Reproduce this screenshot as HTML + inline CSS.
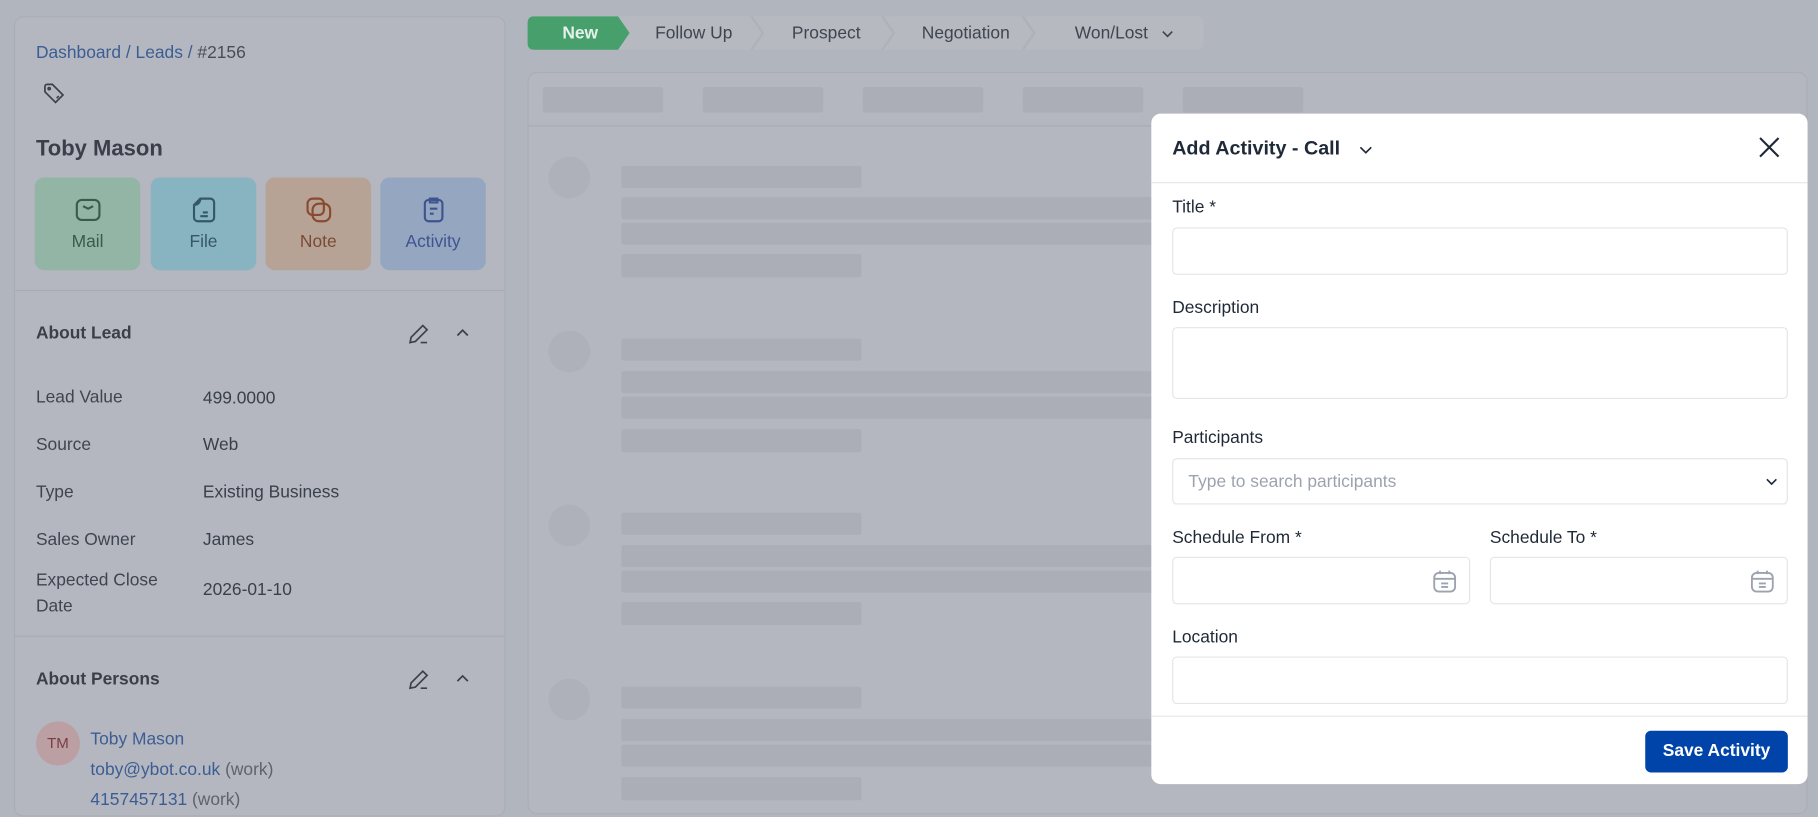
<!DOCTYPE html>
<html><head><meta charset="utf-8"><style>
*{box-sizing:border-box;margin:0;padding:0}
html,body{width:1818px;height:798px;overflow:hidden;background:#b1b5bd;font-family:"Liberation Sans",sans-serif}
#w{position:absolute;left:0;top:0;width:1568px;height:688px;transform:scale(1.15944,1.15988);transform-origin:0 0}
.a{position:absolute}
.sk{position:absolute;background:#abaeb6;border-radius:2px}
.lbl{position:absolute;font-size:15px;color:#3f4550}
.val{position:absolute;font-size:15px;color:#3a404b}
.btn{position:absolute;top:153px;width:91px;height:80px;border-radius:8px;text-align:center;font-size:15px}
.btn svg{display:block;margin:15px auto 6px}
.ml{position:absolute;left:1011px;font-size:15px;color:#1f2937}
.in{position:absolute;left:1011px;width:531px;background:#fff;border:1px solid #e3e5e8;border-radius:4px}
</style></head><body><div id="w">
<!-- left panel -->
<div class="a" style="left:12px;top:14px;width:424px;height:690px;background:#b4b7bf;border:1px solid #a9adb5;border-radius:8px"></div>
<div class="a" style="left:31px;top:37px;font-size:15px;color:#3c5d93">Dashboard / Leads / <span style="color:#474d58">#2156</span></div>
<svg class="a" style="left:36px;top:70px" width="22" height="22" viewBox="0 0 24 24" fill="none" stroke="#3b414b" stroke-width="1.6"><path d="M3 5v5l10 10 7-7L10 3H5a2 2 0 0 0-2 2z"/><circle cx="7" cy="7" r="1"/><path d="M14 16l2-2"/></svg>
<div class="a" style="left:31px;top:118px;font-size:19px;font-weight:bold;color:#3a3f49">Toby Mason</div>
<div class="btn" style="left:30px;background:#93b5a6;color:#3a5b4c"><svg width="26" height="26" viewBox="0 0 24 24" fill="none" stroke="#3a5b4c" stroke-width="1.7"><rect x="3" y="4" width="18" height="16" rx="4"/><path d="M8 9l4 2 4-2"/></svg>Mail</div>
<div class="btn" style="left:130px;background:#88b3c0;color:#355866"><svg width="26" height="26" viewBox="0 0 24 24" fill="none" stroke="#355866" stroke-width="1.7"><path d="M9 3h8a3 3 0 0 1 3 3v12a3 3 0 0 1-3 3H7a3 3 0 0 1-3-3V8z M4 8c3 0 5-2 5-5M11 14h4M9 17h6"/></svg>File</div>
<div class="btn" style="left:229px;background:#b6a395;color:#7a4b35"><svg width="26" height="26" viewBox="0 0 24 24" fill="none" stroke="#8a4a30" stroke-width="1.7"><rect x="3" y="3" width="13" height="13" rx="4"/><rect x="7" y="7" width="14" height="14" rx="5"/></svg>Note</div>
<div class="btn" style="left:328px;background:#95a7c0;color:#3f548f"><svg width="26" height="26" viewBox="0 0 24 24" fill="none" stroke="#3f548f" stroke-width="1.7"><rect x="5" y="4" width="14" height="17" rx="3"/><path d="M9 3h6v3H9zM9 11h6M9 15h3"/></svg>Activity</div>
<div class="a" style="left:13px;top:250px;width:423px;height:1px;background:#a7abb3"></div>
<div class="a" style="left:31px;top:279px;font-size:15px;font-weight:bold;color:#3a3f49">About Lead</div>
<svg class="a" style="left:350px;top:277px" width="22" height="22" viewBox="0 0 24 24" fill="none" stroke="#3b414b" stroke-width="1.6"><path d="M4 20l1-5L16 4l4 4L9 19zM14 20h6"/></svg>
<svg class="a" style="left:390px;top:278px" width="18" height="18" viewBox="0 0 24 24" fill="none" stroke="#3b414b" stroke-width="2"><path d="M6 15l6-6 6 6"/></svg>
<div class="lbl" style="left:31px;top:334px">Lead Value</div><div class="val" style="left:175px;top:335px">499.0000</div>
<div class="lbl" style="left:31px;top:375px">Source</div><div class="val" style="left:175px;top:375px">Web</div>
<div class="lbl" style="left:31px;top:416px">Type</div><div class="val" style="left:175px;top:416px">Existing Business</div>
<div class="lbl" style="left:31px;top:457px">Sales Owner</div><div class="val" style="left:175px;top:457px">James</div>
<div class="lbl" style="left:31px;top:490px;line-height:22px">Expected Close<br>Date</div><div class="val" style="left:175px;top:500px">2026-01-10</div>
<div class="a" style="left:13px;top:548px;width:423px;height:1px;background:#a7abb3"></div>
<div class="a" style="left:31px;top:577px;font-size:15px;font-weight:bold;color:#3a3f49">About Persons</div>
<svg class="a" style="left:350px;top:575px" width="22" height="22" viewBox="0 0 24 24" fill="none" stroke="#3b414b" stroke-width="1.6"><path d="M4 20l1-5L16 4l4 4L9 19zM14 20h6"/></svg>
<svg class="a" style="left:390px;top:576px" width="18" height="18" viewBox="0 0 24 24" fill="none" stroke="#3b414b" stroke-width="2"><path d="M6 15l6-6 6 6"/></svg>
<div class="a" style="left:31px;top:622px;width:38px;height:38px;border-radius:50%;background:#bb9fa3;color:#7a3d46;font-size:13px;line-height:38px;text-align:center">TM</div>
<div class="a" style="left:78px;top:625px;font-size:15px;color:#3c5d93;line-height:26px">Toby Mason<br>toby@ybot.co.uk <span style="color:#5d636d">(work)</span><br>4157457131 <span style="color:#5d636d">(work)</span></div>
<!-- stages -->
<div class="a" style="left:455px;top:14px;width:583px;height:29px;background:#b6b9c0;border-radius:6px"></div>
<svg class="a" style="left:455px;top:14px" width="95" height="29"><path d="M6 0H78L88 14.5 78 29H6Q0 29 0 23V6Q0 0 6 0z" fill="#47a06c"/></svg>
<svg class="a" style="left:530px;top:14px" width="400" height="29" fill="none" stroke="#aeb1b9" stroke-width="2"><path d="M118 0l10 14.5-10 14.5M231 0l10 14.5-10 14.5M352 0l10 14.5-10 14.5"/></svg>
<div class="a" style="left:485px;top:20px;font-size:15px;color:#e4f1ea;font-weight:bold">New</div>
<div class="a" style="left:565px;top:20px;font-size:15px;color:#3f4550">Follow Up</div>
<div class="a" style="left:683px;top:20px;font-size:15px;color:#3f4550">Prospect</div>
<div class="a" style="left:795px;top:20px;font-size:15px;color:#3f4550">Negotiation</div>
<div class="a" style="left:927px;top:20px;font-size:15px;color:#3f4550">Won/Lost</div>
<svg class="a" style="left:1000px;top:22px" width="14" height="14" viewBox="0 0 24 24" fill="none" stroke="#3f4550" stroke-width="2.4"><path d="M5 9l7 7 7-7"/></svg>
<!-- main card -->
<div class="a" style="left:455px;top:62px;width:1104px;height:640px;background:#b4b7bf;border:1px solid #a9adb5;border-radius:8px"></div>
<div class="a" style="left:456px;top:108px;width:1102px;height:1px;background:#a8acb4"></div>
<div class="sk" style="left:468px;top:75px;width:104px;height:22px"></div>
<div class="sk" style="left:606px;top:75px;width:104px;height:22px"></div>
<div class="sk" style="left:744px;top:75px;width:104px;height:22px"></div>
<div class="sk" style="left:882px;top:75px;width:104px;height:22px"></div>
<div class="sk" style="left:1020px;top:75px;width:104px;height:22px"></div>
<div class="a" style="left:473px;top:135px;width:36px;height:36px;border-radius:50%;background:#aeb1b9"></div>
<div class="sk" style="left:536px;top:143px;width:207px;height:19px"></div><div class="sk" style="left:536px;top:170px;width:460px;height:19px"></div><div class="sk" style="left:536px;top:192px;width:460px;height:19px"></div><div class="sk" style="left:536px;top:219px;width:207px;height:20px"></div>
<div class="a" style="left:473px;top:285px;width:36px;height:36px;border-radius:50%;background:#aeb1b9"></div>
<div class="sk" style="left:536px;top:292px;width:207px;height:19px"></div><div class="sk" style="left:536px;top:320px;width:460px;height:19px"></div><div class="sk" style="left:536px;top:342px;width:460px;height:19px"></div><div class="sk" style="left:536px;top:370px;width:207px;height:20px"></div>
<div class="a" style="left:473px;top:435px;width:36px;height:36px;border-radius:50%;background:#aeb1b9"></div>
<div class="sk" style="left:536px;top:442px;width:207px;height:19px"></div><div class="sk" style="left:536px;top:470px;width:460px;height:19px"></div><div class="sk" style="left:536px;top:492px;width:460px;height:19px"></div><div class="sk" style="left:536px;top:519px;width:207px;height:20px"></div>
<div class="a" style="left:473px;top:585px;width:36px;height:36px;border-radius:50%;background:#aeb1b9"></div>
<div class="sk" style="left:536px;top:592px;width:207px;height:19px"></div><div class="sk" style="left:536px;top:620px;width:460px;height:19px"></div><div class="sk" style="left:536px;top:642px;width:460px;height:19px"></div><div class="sk" style="left:536px;top:670px;width:207px;height:20px"></div>
<!-- modal -->
<div class="a" style="left:993px;top:98px;width:566px;height:578px;background:#fff;border-radius:8px"></div>
<div class="a" style="left:993px;top:157px;width:566px;height:1px;background:#e5e7eb"></div>
<div class="a" style="left:993px;top:617px;width:566px;height:1px;background:#e5e7eb"></div>
<div class="a" style="left:1011px;top:118px;font-size:17px;font-weight:bold;color:#1f2937">Add Activity - Call</div>
<svg class="a" style="left:1170px;top:121px" width="16" height="16" viewBox="0 0 24 24" fill="none" stroke="#1f2937" stroke-width="2.2"><path d="M5 9l7 7 7-7"/></svg>
<svg class="a" style="left:1514px;top:115px" width="24" height="24" viewBox="0 0 24 24" fill="none" stroke="#1f2937" stroke-width="1.8"><path d="M4 4l16 16M20 4L4 20"/></svg>
<div class="ml" style="top:170px">Title *</div>
<div class="in" style="top:196px;height:41px"></div>
<div class="ml" style="top:257px">Description</div>
<div class="in" style="top:282px;height:62px"></div>
<div class="ml" style="top:369px">Participants</div>
<div class="in" style="top:395px;height:40px"><span class="a" style="left:13px;top:11px;font-size:15px;color:#9ca3af">Type to search participants</span>
<svg class="a" style="left:509px;top:12px" width="14" height="14" viewBox="0 0 24 24" fill="none" stroke="#1f2937" stroke-width="2.4"><path d="M5 9l7 7 7-7"/></svg></div>
<div class="ml" style="top:455px">Schedule From *</div>
<div class="ml" style="top:455px;left:1285px">Schedule To *</div>
<div class="in" style="top:480px;height:41px;width:257px"><svg class="a" style="left:222px;top:8px" width="24" height="24" viewBox="0 0 24 24" fill="none" stroke="#9ca3af" stroke-width="1.6"><rect x="3" y="5" width="18" height="16" rx="4"/><path d="M3 10h18M8 3v3M16 3v3M9 14h6M9 17h6"/></svg></div>
<div class="in" style="top:480px;height:41px;width:257px;left:1285px"><svg class="a" style="left:222px;top:8px" width="24" height="24" viewBox="0 0 24 24" fill="none" stroke="#9ca3af" stroke-width="1.6"><rect x="3" y="5" width="18" height="16" rx="4"/><path d="M3 10h18M8 3v3M16 3v3M9 14h6M9 17h6"/></svg></div>
<div class="ml" style="top:541px">Location</div>
<div class="in" style="top:566px;height:41px"></div>
<div class="a" style="left:1419px;top:630px;width:123px;height:36px;background:#0044aa;border-radius:5px;color:#fff;font-size:15px;font-weight:bold;line-height:36px;text-align:center">Save Activity</div>
</div></body></html>
